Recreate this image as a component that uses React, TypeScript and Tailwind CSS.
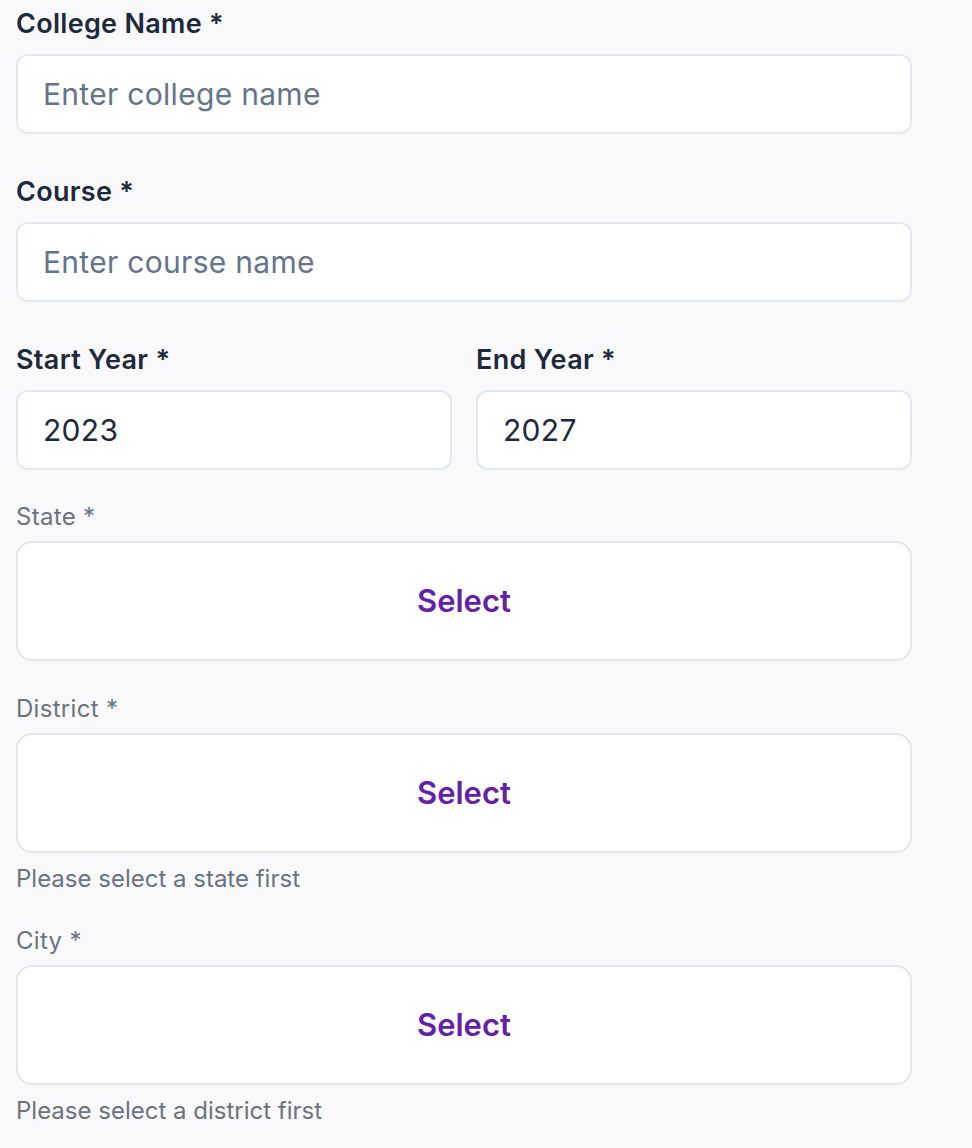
import React from "react";

const FONT = { fontFamily: "Inter, 'Noto Sans', sans-serif" };

function TextField({
  label,
  placeholder,
  value,
}: {
  label: string;
  placeholder?: string;
  value?: string;
}) {
  return (
    <div className="flex flex-col">
      <label className="text-[27px] leading-[32px] font-semibold tracking-[0.3px] text-[#1e293b] mb-[14px]">
        {label}
      </label>
      <input
        type="text"
        defaultValue={value}
        placeholder={placeholder}
        className="h-[80px] w-full rounded-[12px] border-2 border-[#e2e8f0] bg-white px-[25px] text-[30px] tracking-[0.3px] text-[#1e293b] placeholder:text-[#64748b] outline-none"
      />
    </div>
  );
}

function SelectField({ label, hint }: { label: string; hint?: string }) {
  return (
    <div className="flex flex-col">
      <span className="text-[24px] leading-[28px] tracking-[0.3px] text-[#6b7280] mb-[10px]">
        {label}
      </span>
      <button
        type="button"
        className="h-[120px] w-full rounded-[16px] border-2 border-[#e5e7eb] bg-white flex items-center justify-center"
      >
        <span className="text-[31px] font-semibold text-[#6320a9]">Select</span>
      </button>
      {hint && (
        <p className="mt-[12px] text-[24px] leading-[28px] text-[#6b7280]">
          {hint}
        </p>
      )}
    </div>
  );
}

export default function App() {
  return (
    <div className="min-h-screen bg-[#f9f9fb]" style={FONT}>
      <div className="w-[896px] ml-4 pt-[8px] pb-8 flex flex-col">
        <TextField label="College Name *" placeholder="Enter college name" />
        <div className="mt-[42px]">
          <TextField label="Course *" placeholder="Enter course name" />
        </div>
        <div className="mt-[42px] grid grid-cols-2 gap-6">
          <TextField label="Start Year *" value="2023" />
          <TextField label="End Year *" value="2027" />
        </div>
        <div className="mt-[33px] flex flex-col gap-[34px]">
          <SelectField label="State *" />
          <SelectField label="District *" hint="Please select a state first" />
          <SelectField label="City *" hint="Please select a district first" />
        </div>
      </div>
    </div>
  );
}
